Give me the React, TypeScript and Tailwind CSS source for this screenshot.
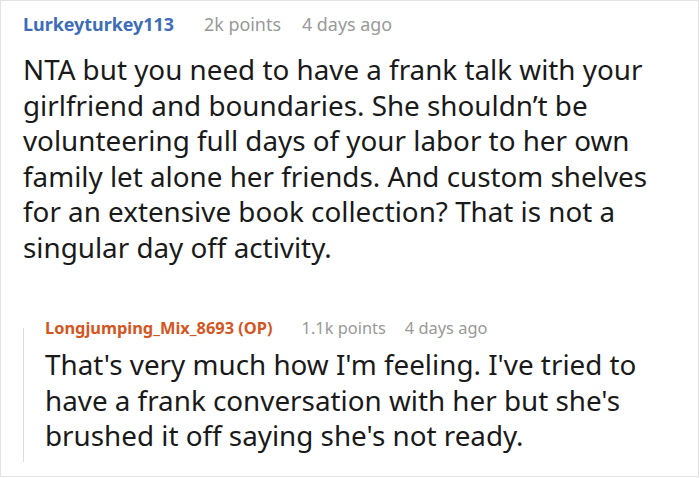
export default function App() {
  return (
    <div
      className="h-[478px] w-[700px] overflow-hidden bg-white"
      style={{ fontFamily: '"Noto Sans", "Open Sans", sans-serif' }}
    >
      <div className="h-[477px] w-[699px] border border-[#e3e3e3] pl-[22px] pr-[6px] pt-[11px]">
        <div className="flex items-baseline text-[17.9px] leading-[24px]">
          <span className="font-bold text-[#3d6cb8]">Lurkeyturkey113</span>
          <span className="ml-[30px] text-[#999999]">2k points</span>
          <span className="ml-[21px] text-[#999999]">4 days ago</span>
        </div>
        <p className="mt-[16px] text-[27.8px] leading-[35.5px] text-[#1a1a1a]">
          NTA but you need to have a frank talk with your girlfriend and boundaries. She shouldn’t be
          volunteering full days of your labor to her own family let alone her friends. And custom
          shelves for an extensive book collection? That is not a singular day off activity.
        </p>
        <div className="mt-[51px] flex">
          <div className="mt-[12px] h-[134px] w-px shrink-0 bg-[#dcdcdc]" />
          <div className="pl-[21px]">
            <div className="flex items-baseline text-[16.4px] leading-[24px]">
              <span className="font-bold text-[#d4561f]">Longjumping_Mix_8693 (OP)</span>
              <span className="ml-[29px] text-[#999999]">1.1k points</span>
              <span className="ml-[19px] text-[#999999]">4 days ago</span>
            </div>
            <p className="mt-[7px] text-[27.8px] leading-[35.5px] text-[#1a1a1a]">
              That's very much how I'm feeling. I've tried to have a frank conversation with her but
              she's brushed it off saying she's not ready.
            </p>
          </div>
        </div>
      </div>
    </div>
  );
}
